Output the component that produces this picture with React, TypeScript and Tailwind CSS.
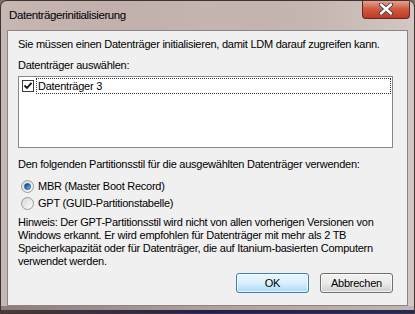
import React from 'react';

const CheckBox: React.FC = () => (
  <div className="w-[12px] h-[12px] border border-[#3b3b3b] bg-white flex items-center justify-center">
    <svg width="10" height="10" viewBox="0 0 10 10">
      <path d="M1.5 4.5 L4 7 L8.5 1.8" fill="none" stroke="#111" strokeWidth="1.8" />
    </svg>
  </div>
);

const Radio: React.FC<{ checked?: boolean }> = ({ checked = false }) => (
  <div className="w-[13px] h-[13px] rounded-full border border-[#9a9a9a] bg-gradient-to-br from-[#d8d8d8] to-[#fbfbfb] flex items-center justify-center">
    {checked && (
      <div className="w-[7px] h-[7px] rounded-full bg-gradient-to-br from-[#0b3f86] via-[#1f7fd0] to-[#8ad6f6] border border-[#1d4f86]" />
    )}
  </div>
);

export default function App() {
  return (
    <div
      className="w-[415px] h-[314px] bg-[#7d6c68]"
      style={{ fontFamily: '"Liberation Sans", Arial, sans-serif' }}
    >
      <div className="relative w-full h-full rounded-t-[7px] border border-[#3e3433] overflow-hidden flex flex-col bg-gradient-to-r from-[#c8b8b4] via-[#a8958f] to-[#d4c8c4]">
        {/* title bar */}
        <div className="h-[29px] flex items-start justify-between pl-[8px] pr-[4px] bg-gradient-to-r from-transparent via-[#d9c9c5]/60 to-transparent">
          <span className="mt-[7px] text-[11.5px] leading-[14px] tracking-[-0.4px] text-black">Datenträgerinitialisierung</span>
          <div className="-mt-[1px] w-[48px] h-[19px] rounded-b-[4px] border border-[#5b2a22] border-t-0 bg-gradient-to-b from-[#e8a898] via-[#cf5a40] to-[#c0391f] flex items-center justify-center shadow-[inset_0_1px_0_rgba(255,255,255,0.5)]">
            <svg width="16" height="12" viewBox="0 0 16 12">
              <path d="M3 1.5 L13 10.5 M13 1.5 L3 10.5" stroke="#3a3a4a" strokeWidth="4.2" strokeLinecap="round" />
              <path d="M3 1.5 L13 10.5 M13 1.5 L3 10.5" stroke="#ffffff" strokeWidth="2.4" strokeLinecap="round" />
            </svg>
          </div>
        </div>

        {/* client */}
        <div className="mx-[6px] h-[276px] border border-[#8a8587] bg-[#f0f0f0] pl-[10px] pr-[14px] pt-[7px] text-[11px] leading-[13px] tracking-[-0.25px] text-black">
          <p>Sie müssen einen Datenträger initialisieren, damit LDM darauf zugreifen kann.</p>
          <p className="mt-[8px]">Datenträger auswählen:</p>
          <div className="mt-[4px] h-[72px] border border-[#828790] bg-white pl-[3px] pr-[1px] pt-[1px]">
            <div className="flex items-center h-[16px]">
              <CheckBox />
              <div className="ml-[2px] flex-1 h-[16px] border border-dotted border-[#333] flex items-center pl-[1px]">
                Datenträger 3
              </div>
            </div>
          </div>
          <p className="mt-[10px]">Den folgenden Partitionsstil für die ausgewählten Datenträger verwenden:</p>
          <div className="mt-[7px] flex flex-col">
            <div className="h-[17px] flex items-center gap-[4px] pl-[3px]">
              <Radio checked />
              <span>MBR (Master Boot Record)</span>
            </div>
            <div className="h-[17px] flex items-center gap-[4px] pl-[3px]">
              <Radio />
              <span>GPT (GUID-Partitionstabelle)</span>
            </div>
          </div>
          <p className="mt-[4px]">
            Hinweis: Der GPT-Partitionsstil wird nicht von allen vorherigen Versionen von Windows erkannt. Er wird empfohlen für Datenträger mit mehr als 2 TB Speicherkapazität oder für Datenträger, die auf Itanium-basierten Computern verwendet werden.
          </p>
          <div className="mt-[5px] flex justify-end gap-[11px]">
            <div className="w-[73px] h-[20px] rounded-[3px] border border-[#3c7fb1] bg-gradient-to-b from-[#eaf6fd] via-[#d9f0fc] to-[#a7d9f5] flex items-center justify-center shadow-[inset_0_0_0_1px_rgba(255,255,255,0.7)]">
              OK
            </div>
            <div className="w-[73px] h-[20px] rounded-[3px] border border-[#707070] bg-gradient-to-b from-[#f2f2f2] via-[#ebebeb] to-[#cfcfcf] flex items-center justify-center shadow-[inset_0_0_0_1px_rgba(255,255,255,0.7)]">
              Abbrechen
            </div>
          </div>
        </div>

        {/* bottom frame */}
        <div className="flex-1 bg-gradient-to-r from-[#8f7b77] via-[#b39f9a] to-[#c2b4b0] flex flex-col justify-end">
          <div className="h-[3px] bg-gradient-to-r from-[#4a3a3a] via-[#1d2150] to-[#262a5a]" />
        </div>
      </div>
    </div>
  );
}
